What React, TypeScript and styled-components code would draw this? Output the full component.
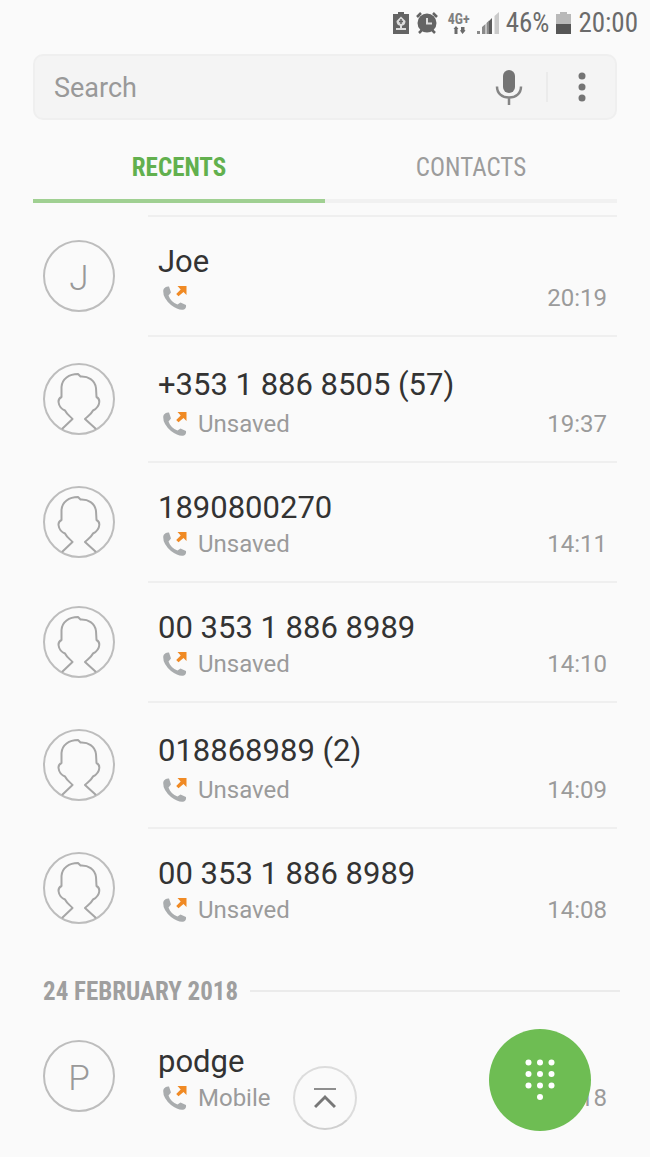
import React from "react";
import styled, { createGlobalStyle } from "styled-components";

const GlobalStyle = createGlobalStyle`
  *, *::before, *::after { box-sizing: border-box; }
  body {
    margin: 0;
    background: #fafafa;
    color: #333;
    font-family: Roboto, "Liberation Sans", sans-serif;
  }
  button, input { font: inherit; color: inherit; }
`;

const condensed = `"Roboto Condensed", Roboto, "Liberation Sans", sans-serif`;

const Page = styled.div`
  min-height: 100vh;
  padding: 0 33px 20px;
`;

const StatusBar = styled.header`
  display: flex;
  align-items: center;
  justify-content: flex-end;
  gap: 7px;
  height: 46px;
  margin-right: -21px;
  color: #6b6b6b;
  font-family: ${condensed};
  font-size: 27px;
  line-height: 46px;

  svg { display: block; flex: none; }
`;

const SearchBar = styled.form`
  display: flex;
  align-items: center;
  height: 66px;
  margin-top: 8px;
  border: 2px solid #efefef;
  border-radius: 10px;
  background: #f4f4f4;
`;

const SearchInput = styled.input`
  flex: 1;
  min-width: 0;
  height: 100%;
  padding: 2px 0 0 19px;
  border: 0;
  outline: 0;
  background: transparent;
  font-size: 27px;

  &::placeholder { color: #999; opacity: 1; }
`;

const IconButton = styled.button<{ $wide?: boolean }>`
  display: flex;
  align-items: center;
  justify-content: center;
  width: ${(p) => (p.$wide ? 74 : 69)}px;
  height: 30px;
  padding: 0;
  border: 0;
  background: transparent;
  cursor: pointer;

  svg { flex: none; }
  & + & { border-left: 2px solid #ebebeb; }
`;

const Tabs = styled.div`
  display: flex;
  height: 83px;
`;

const Tab = styled.button<{ $active?: boolean }>`
  flex: 1;
  padding: 15px 0 0;
  border: 0;
  border-bottom: 4px solid ${(p) => (p.$active ? "#a0d092" : "#f1f1f1")};
  background: transparent;
  color: ${(p) => (p.$active ? "#62b04e" : "#9c9c9c")};
  font-family: ${condensed};
  font-size: 25px;
  font-weight: ${(p) => (p.$active ? 700 : 400)};
  cursor: pointer;
`;

const CallList = styled.ul`
  margin: 0;
  padding: 0;
  list-style: none;
`;

const RecentCalls = styled(CallList)`
  padding-top: 12px;
`;

const Row = styled.li`
  display: grid;
  grid-template-columns: 72px minmax(0, 1fr);
  column-gap: 33px;
  align-items: center;
  padding-left: 10px;
`;

const Avatar = styled.div<{ $letter?: boolean }>`
  display: flex;
  align-items: center;
  justify-content: center;
  width: 72px;
  height: 72px;
  margin-top: 2px;
  padding-top: ${(p) => (p.$letter ? 4 : 0)}px;
  border: 2px solid #bdbdbd;
  border-radius: 50%;
  color: #999;
  font-size: 35px;
  font-weight: 300;
`;

const Details = styled.div<{ $tall?: boolean; $divided?: boolean }>`
  display: flex;
  flex-direction: column;
  gap: ${(p) => (p.$tall ? 3 : 0)}px;
  padding: ${(p) => (p.$tall ? 30 : 27)}px 10px 19px;
  border-top: 2px solid ${(p) => (p.$divided ? "#efefef" : "transparent")};
`;

const Name = styled.div`
  overflow: hidden;
  font-size: 31px;
  line-height: 36px;
  white-space: nowrap;
  text-overflow: ellipsis;
`;

const Meta = styled.div`
  display: flex;
  align-items: center;
  gap: 10px;
  padding-left: 4px;
  color: #9b9b9b;
  font-size: 24px;
  line-height: 36px;
`;

const Time = styled.time`
  margin-left: auto;
`;

const DateHeading = styled.h2`
  display: flex;
  align-items: center;
  gap: 12px;
  height: 68px;
  margin: 0 -3px 0 0;
  padding: 20px 0 0 10px;
  color: #9f9f9f;
  font-family: ${condensed};
  font-size: 25px;
  font-weight: 700;

  &::after {
    content: "";
    flex: 1;
    height: 2px;
    background: #ebebeb;
  }
`;

const FloatingButton = styled.button`
  position: fixed;
  display: flex;
  align-items: center;
  justify-content: center;
  padding: 0;
  border-radius: 50%;
  cursor: pointer;
`;

const TopButton = styled(FloatingButton)`
  bottom: 27px;
  left: calc(50% - 32px);
  width: 64px;
  height: 64px;
  border: 2px solid #dcdcdc;
  border-bottom-color: #cfcfcf;
  background: #fafafa;
`;

const DialButton = styled(FloatingButton)`
  right: 59px;
  bottom: 26px;
  width: 102px;
  height: 102px;
  border: 0;
  background: #6ebd53;
`;

const BatterySaverIcon = () => (
  <svg width="16" height="22" viewBox="0 0 16 22" aria-hidden="true">
    <path d="M5 0h6v2h5v20H0V2h5z" fill="#646464" />
    <path d="M8 4.500l4.500 4.500c0 3-1.500 4.500-3.500 4.700V16h4v2H3v-2h4v-2.300C5 13.500 3.500 12 3.500 9z" fill="#dcdcdc" />
    <path d="M8 7v5M6 9.500h4" stroke="#646464" strokeWidth="1.500" />
  </svg>
);

const AlarmIcon = () => (
  <svg width="22" height="22" viewBox="0 0 22 22" aria-hidden="true">
    <path d="M1 5l4-4M21 5l-4-4M3 21l4-4M19 21l-4-4" stroke="#646464" strokeWidth="2.500" />
    <circle cx="11" cy="11" r="9.500" fill="#646464" />
    <path d="M11 6v5.500h5" fill="none" stroke="#ddd" strokeWidth="2" />
  </svg>
);

const NetworkType = styled.span`
  display: flex;
  flex-direction: column;
  align-items: center;
  margin-left: 3px;
  color: #808080;
  font-size: 14px;
  font-weight: 700;
  line-height: 13px;
`;

const DataArrowsIcon = () => (
  <svg width="14" height="8" viewBox="0 0 14 8" aria-hidden="true">
    <path d="M4 0L6.500 3H5.500V8H2.500V3H1.500zM10.500 8L8 4.500 9 4V1h3.500v3l1 .5z" fill="#6b6b6b" />
  </svg>
);

const SignalIcon = () => (
  <svg width="22" height="22" viewBox="0 0 22 22" aria-hidden="true">
    <path d="M17.500 4L22 0v22h-4.500z" fill="#cacaca" />
    <path d="M0 19h3v3H0zM5 15l3.500-3v10H5zM9.500 11L12 8.500V22H9.500z" fill="#8a8a8a" />
    <path d="M12 9l3-3v16h-3z" fill="#5c5c5c" />
  </svg>
);

const BatteryIcon = () => (
  <svg width="15" height="22" viewBox="0 0 15 22" aria-hidden="true">
    <path d="M4 0h7v2h4v20H0V2h4z" fill="#b9b9b9" />
    <path d="M0 12h15v10H0z" fill="#565656" />
  </svg>
);

const MicIcon = () => (
  <svg width="28" height="36" viewBox="0 0 28 36" aria-hidden="true">
    <rect x="8" y="1" width="12" height="23" rx="6" fill="#747474" />
    <path d="M2 17.500c0 7 5 11 12 11s12-4 12-11M14 28v8" fill="none" stroke="#858585" strokeWidth="2.500" />
  </svg>
);

const MoreIcon = () => (
  <svg width="8" height="30" viewBox="0 0 8 30" fill="#747474" aria-hidden="true">
    <circle cx="4" cy="4" r="3.500" />
    <circle cx="4" cy="15" r="3.500" />
    <circle cx="4" cy="26" r="3.500" />
  </svg>
);

const PersonIcon = () => (
  <svg width="68" height="68" viewBox="0 0 68 68" aria-hidden="true">
    <path
      d="M17 64L27.500 54C25 51 22 49.500 20 45.500C16.500 44 14 41 13.500 37C13.300 34.500 14.500 33 16.500 32V22C17 14 24 9 33 9L35.500 11.500C43 11 50 15 51 23L51.500 32C53.500 33 54.500 34.500 54.300 37C54 41 51 44 48 45.500C46 49.500 43 51 40 54L51 64"
      fill="none"
      stroke="#a6a6a6"
      strokeWidth="2"
      strokeLinejoin="round"
    />
  </svg>
);

const OutgoingCallIcon = () => (
  <svg width="26" height="26" viewBox="0 0 26 26" role="img" aria-label="Outgoing call">
    <path
      d="M2 3.500Q4 1 7 1.500L9 7.500 6.500 10.500C8 15 11 17.500 15.500 19.500L18.500 17.500 24 20Q24.500 23 22 24.500 17 26 9 20 1 13 1.200 6 1.200 4.500 2 3.500z"
      fill="#a9acae"
    />
    <path d="M15.500 1h9v9l-3-3-5 4.200-2.300-2.300 4.500-4.500z" fill="#f08a24" />
  </svg>
);

const ScrollTopIcon = () => (
  <svg width="22" height="22" viewBox="0 0 22 22" fill="none" aria-hidden="true">
    <path d="M0 2h22" stroke="#8e8e8e" strokeWidth="2" />
    <path d="M1 20l10-10 10 10" stroke="#777" strokeWidth="3" />
  </svg>
);

const keypadDots = [0, 1, 2].flatMap((r) => [0, 1, 2].map((c) => [c, r])).concat([[1, 3]]);

const KeypadIcon = () => (
  <svg width="30" height="42" viewBox="0 0 30 42" fill="#fff" aria-hidden="true">
    {keypadDots.map(([c, r]) => (
      <circle key={`${c}-${r}`} cx={3.5 + c * 11.5} cy={3.5 + r * 11.5} r="3" />
    ))}
  </svg>
);

interface Call {
  name: string;
  label?: string;
  time: string;
  initial?: string;
  tall?: boolean;
}

const recentCalls: Call[] = [
  { name: "Joe", time: "20:19", initial: "J" },
  { name: "+353 1 886 8505 (57)", label: "Unsaved", time: "19:37", tall: true },
  { name: "1890800270", label: "Unsaved", time: "14:11" },
  { name: "00 353 1 886 8989", label: "Unsaved", time: "14:10" },
  { name: "018868989 (2)", label: "Unsaved", time: "14:09", tall: true },
  { name: "00 353 1 886 8989", label: "Unsaved", time: "14:08" },
];

const olderCalls: Call[] = [{ name: "podge", label: "Mobile", time: "14:18", initial: "P" }];

const CallRow = ({ call, divided }: { call: Call; divided?: boolean }) => (
  <Row>
    <Avatar $letter={Boolean(call.initial)}>{call.initial ?? <PersonIcon />}</Avatar>
    <Details $tall={call.tall} $divided={divided}>
      <Name>{call.name}</Name>
      <Meta>
        <OutgoingCallIcon />
        {call.label && <span>{call.label}</span>}
        <Time>{call.time}</Time>
      </Meta>
    </Details>
  </Row>
);

export default function App() {
  return (
    <>
      <GlobalStyle />
      <Page>
        <StatusBar>
          <BatterySaverIcon />
          <AlarmIcon />
          <NetworkType>
            4G+
            <DataArrowsIcon />
          </NetworkType>
          <SignalIcon />
          <span>46%</span>
          <BatteryIcon />
          <span>20:00</span>
        </StatusBar>
        <SearchBar role="search" onSubmit={(e) => e.preventDefault()}>
          <SearchInput type="text" placeholder="Search" aria-label="Search" />
          <IconButton type="button" aria-label="Voice search" $wide>
            <MicIcon />
          </IconButton>
          <IconButton type="button" aria-label="More options">
            <MoreIcon />
          </IconButton>
        </SearchBar>
        <Tabs role="tablist">
          <Tab type="button" role="tab" aria-selected="true" $active>
            RECENTS
          </Tab>
          <Tab type="button" role="tab" aria-selected="false">
            CONTACTS
          </Tab>
        </Tabs>
        <main>
          <RecentCalls>
            {recentCalls.map((call) => (
              <CallRow key={call.time} call={call} divided />
            ))}
          </RecentCalls>
          <DateHeading>24 FEBRUARY 2018</DateHeading>
          <CallList>
            {olderCalls.map((call) => (
              <CallRow key={call.time} call={call} />
            ))}
          </CallList>
        </main>
      </Page>
      <TopButton type="button" aria-label="Scroll to top">
        <ScrollTopIcon />
      </TopButton>
      <DialButton type="button" aria-label="Open keypad">
        <KeypadIcon />
      </DialButton>
    </>
  );
}
